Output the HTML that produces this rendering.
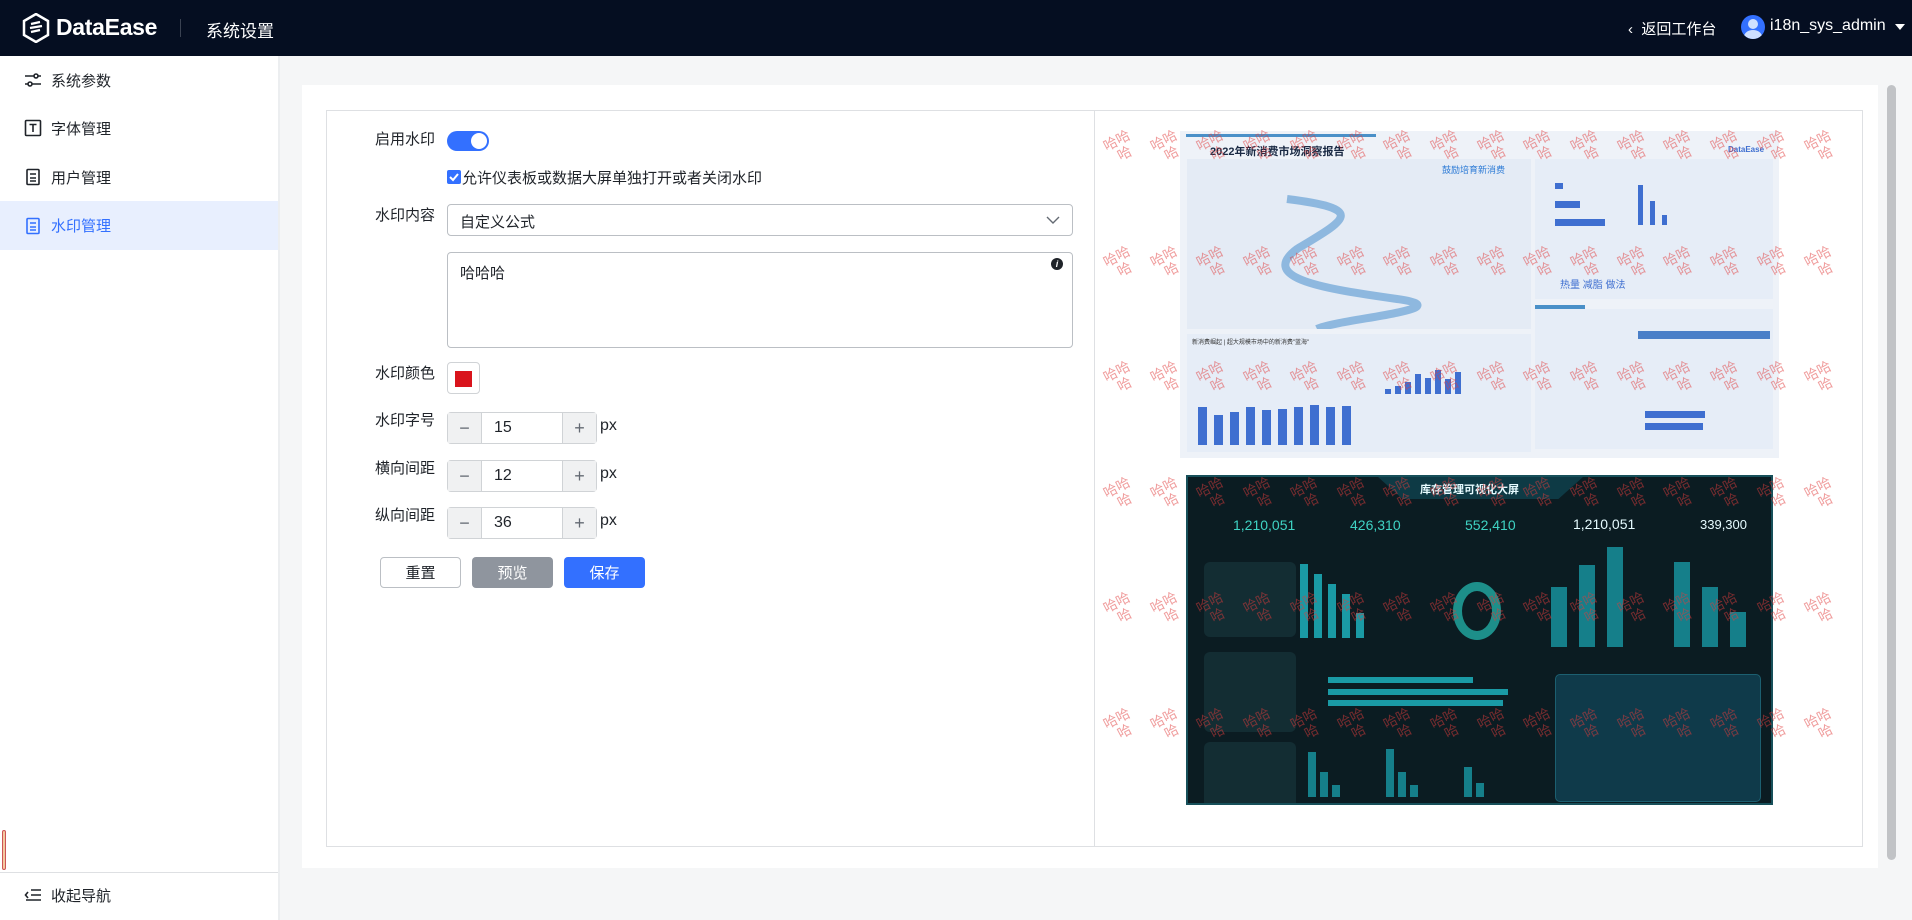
<!DOCTYPE html>
<html><head><meta charset="utf-8">
<style>
*{box-sizing:border-box;margin:0;padding:0}
body{width:1912px;height:920px;overflow:hidden;font-family:"Liberation Sans","Noto Sans CJK SC",sans-serif;background:#f5f6f7;position:relative;color:#1f2329}
.abs{position:absolute}
.hdr{left:0;top:0;width:1912px;height:56px;background:#050e21}
.side{left:0;top:56px;width:278px;height:864px;background:#fff}
.nav{position:absolute;left:0;width:278px;height:48px;display:flex;align-items:center;padding-left:24px;font-size:15px;color:#1f2329}
.nav svg{margin-right:9px}
.lbl{position:absolute;font-size:15px;color:#1f2329;text-align:right;width:100px;left:335px}
.inp{position:absolute;border:1px solid #bbbfc4;border-radius:4px;background:#fff}
.num{position:absolute;left:447px;width:150px;height:32px;border:1px solid #d0d3d6;border-radius:4px;background:#fff;display:flex}
.num .b{width:33px;background:#f0f1f2;display:flex;align-items:center;justify-content:center;font-size:18px;color:#646a73}
.num .v{flex:1;border-left:1px solid #d0d3d6;border-right:1px solid #d0d3d6;padding-left:12px;line-height:30px;font-size:16px}
.px{position:absolute;left:600px;font-size:16px}
.btn{position:absolute;top:557px;height:31px;width:81px;border-radius:4px;font-size:15px;display:flex;align-items:center;justify-content:center}
.wm{position:absolute;width:34px;font-size:14px;line-height:15px;color:rgba(225,60,60,.5);transform:rotate(-28deg)}
.wm span{display:block;padding-left:8px}
</style></head><body>
<div class="abs hdr">
  <svg class="abs" style="left:22px;top:13px" width="28" height="30" viewBox="0 0 28 30"><path d="M14 1 L26 8 V22 L14 29 L2 22 V8 Z" fill="none" stroke="#fff" stroke-width="2.5"/><path d="M9 11 L18 9 M8 15 L20 13 M9 19 L18 17" stroke="#fff" stroke-width="2.2"/></svg>
  <div class="abs" style="left:56px;top:14px;font-size:23px;font-weight:bold;color:#fff;letter-spacing:-0.3px">DataEase</div>
  <div class="abs" style="left:180px;top:19px;width:1px;height:18px;background:#3a4252"></div>
  <div class="abs" style="left:206px;top:17px;font-size:17px;color:#fff">系统设置</div>
  <div class="abs" style="left:1628px;top:18px;font-size:15px;color:#fff">&#8249;&nbsp; 返回工作台</div>
  <div class="abs" style="left:1741px;top:15px;width:24px;height:24px;border-radius:50%;background:#3370ff;overflow:hidden"><div class="abs" style="left:7px;top:4px;width:10px;height:10px;border-radius:50%;background:#cfe0ff"></div><div class="abs" style="left:3px;top:15px;width:18px;height:14px;border-radius:50%;background:#cfe0ff"></div></div>
  <div class="abs" style="left:1770px;top:17px;font-size:16px;color:#fff">i18n_sys_admin</div>
  <div class="abs" style="left:1895px;top:24px;width:0;height:0;border-left:5px solid transparent;border-right:5px solid transparent;border-top:6px solid #fff"></div>
</div>
<div class="abs side">
  <div class="nav" style="top:0"><svg width="18" height="18" viewBox="0 0 18 18" fill="none" stroke="#1f2329" stroke-width="1.6"><path d="M1 5H10M14 5H17M1 13H4M8 13H17"/><circle cx="12" cy="5" r="2"/><circle cx="6" cy="13" r="2"/></svg>系统参数</div>
  <div class="nav" style="top:48px"><svg width="18" height="18" viewBox="0 0 18 18" fill="none" stroke="#1f2329" stroke-width="1.6"><rect x="1.5" y="1.5" width="15" height="15" rx="1"/><path d="M5.5 5.5H12.5M9 5.5V13"/></svg>字体管理</div>
  <div class="nav" style="top:97px"><svg width="18" height="18" viewBox="0 0 18 18" fill="none" stroke="#1f2329" stroke-width="1.6"><rect x="3" y="1.5" width="12" height="15" rx="1"/><path d="M6 6H12M6 10H12M6 13H12"/></svg>用户管理</div>
  <div class="nav" style="top:145px;height:49px;background:#e8effe;color:#3370ff"><svg width="18" height="18" viewBox="0 0 18 18" fill="none" stroke="#3370ff" stroke-width="1.6"><rect x="3" y="1.5" width="12" height="15" rx="1"/><path d="M6 6H12M6 10H12M6 13H12"/></svg>水印管理</div>
  <div class="abs" style="left:2px;top:774px;width:4px;height:40px;border:1px solid #c55;border-radius:2px;background:#f3c9a0"></div>
  <div class="abs" style="left:0;top:816px;width:278px;height:1px;background:#dee0e3"></div>
  <div class="nav" style="top:815px"><svg width="18" height="18" viewBox="0 0 18 18" fill="none" stroke="#1f2329" stroke-width="1.6"><path d="M7 4H17M7 9H17M2 14H17M4 6L1.5 9L4 12"/></svg>收起导航</div>
</div>
<div class="abs" style="left:278px;top:56px;width:2px;height:864px;background:#eceef0"></div>
<div class="abs" style="left:302px;top:85px;width:1576px;height:783px;background:#fff"></div>
<div class="abs" style="left:1887px;top:85px;width:9px;height:775px;background:#c1c3c6;border-radius:5px"></div>
<div class="abs" style="left:326px;top:110px;width:1537px;height:737px;border:1px solid #dee0e3"></div>
<div class="abs" style="left:1094px;top:110px;width:1px;height:737px;background:#dee0e3"></div>

<div class="lbl" style="top:128px">启用水印</div>
<div class="abs" style="left:447px;top:131px;width:42px;height:20px;border-radius:10px;background:#3370ff"><div class="abs" style="left:24px;top:2px;width:16px;height:16px;border-radius:50%;background:#fff"></div></div>
<div class="abs" style="left:447px;top:170px;width:14px;height:14px;border-radius:2px;background:#3370ff"><svg width="14" height="14"><path d="M3 7L6 10L11 4" fill="none" stroke="#fff" stroke-width="2"/></svg></div>
<div class="abs" style="left:462px;top:167px;font-size:15px">允许仪表板或数据大屏单独打开或者关闭水印</div>
<div class="lbl" style="top:204px">水印内容</div>
<div class="inp" style="left:447px;top:204px;width:626px;height:32px"><div class="abs" style="left:12px;top:6px;font-size:15px">自定义公式</div><svg class="abs" style="left:598px;top:10px" width="14" height="10"><path d="M1 2L7 8L13 2" fill="none" stroke="#646a73" stroke-width="1.4"/></svg></div>
<div class="inp" style="left:447px;top:252px;width:626px;height:96px"><div class="abs" style="left:12px;top:9px;font-size:15px">哈哈哈</div><div class="abs" style="left:603px;top:5px;width:12px;height:12px;border-radius:50%;background:#1f2329;color:#fff;font-size:9px;font-style:italic;font-weight:bold;text-align:center;line-height:12px">i</div></div>
<div class="lbl" style="top:362px">水印颜色</div>
<div class="inp" style="left:447px;top:362px;width:33px;height:32px;border-color:#d0d3d6"><div class="abs" style="left:7px;top:8px;width:17px;height:16px;background:#d9141c"></div></div>
<div class="lbl" style="top:409px">水印字号</div>
<div class="num" style="top:412px"><div class="b">−</div><div class="v">15</div><div class="b">+</div></div><div class="px" style="top:417px">px</div>
<div class="lbl" style="top:457px">横向间距</div>
<div class="num" style="top:460px"><div class="b">−</div><div class="v">12</div><div class="b">+</div></div><div class="px" style="top:465px">px</div>
<div class="lbl" style="top:504px">纵向间距</div>
<div class="num" style="top:507px"><div class="b">−</div><div class="v">36</div><div class="b">+</div></div><div class="px" style="top:512px">px</div>
<div class="btn" style="left:380px;border:1px solid #bbbfc4;background:#fff">重置</div>
<div class="btn" style="left:472px;background:#8f959e;color:#fff">预览</div>
<div class="btn" style="left:564px;background:#3370ff;color:#fff">保存</div>

<div class="abs" style="left:1180px;top:131px;width:599px;height:327px;background:#eef2f8;overflow:hidden">
  <div class="abs" style="left:6px;top:3px;width:190px;height:3px;background:#4a90c8"></div>
  <div class="abs" style="left:30px;top:12px;font-size:11px;font-weight:bold;color:#1a2a44">2022年新消费市场洞察报告</div>
  <div class="abs" style="left:548px;top:14px;font-size:8px;color:#3f6fd0;font-weight:bold">DataEase</div>
  <div class="abs" style="left:7px;top:28px;width:344px;height:170px;background:#e4ebf5"></div>
  <svg class="abs" style="left:7px;top:28px" width="344" height="170"><path d="M100 40 C180 50 160 60 110 90 C70 120 140 130 210 140 C280 150 150 160 130 170" fill="none" stroke="#6aa3d6" stroke-width="8" opacity=".7"/></svg>
  <div class="abs" style="left:262px;top:32px;font-size:9px;color:#2d7bd6">鼓励培育新消费</div>
  <div class="abs" style="left:7px;top:203px;width:344px;height:118px;background:#e6edf7"></div>
  <div class="abs" style="left:12px;top:206px;font-size:6px;color:#333">新消费崛起 | 超大规模市场中的新消费"蓝海"</div>
  <div class="abs" style="left:355px;top:28px;width:238px;height:140px;background:#e6edf7"></div>
  <div class="abs" style="left:355px;top:174px;height:4px;background:#4a90c8;width:50px"></div>
  <div class="abs" style="left:355px;top:178px;width:238px;height:140px;background:#e6edf7"></div>
  <div class="abs" style="left:458px;top:200px;width:132px;height:8px;background:#4a7fc8"></div>
  <div class="abs" style="left:375px;top:88px;width:50px;height:7px;background:#3f6fd0"></div>
  <div class="abs" style="left:375px;top:70px;width:25px;height:7px;background:#3f6fd0"></div>
  <div class="abs" style="left:375px;top:52px;width:8px;height:6px;background:#3f6fd0"></div>
  <div class="abs" style="left:458px;top:54px;width:5px;height:40px;background:#3f6fd0"></div>
  <div class="abs" style="left:470px;top:70px;width:5px;height:24px;background:#3f6fd0"></div>
  <div class="abs" style="left:482px;top:84px;width:5px;height:10px;background:#3f6fd0"></div>
  <div class="abs" style="left:380px;top:145px;font-size:10px;color:#3f6fd0">热量 减脂 做法</div>
  <div class="abs" style="left:465px;top:280px;width:60px;height:7px;background:#3f6fd0"></div>
  <div class="abs" style="left:465px;top:292px;width:58px;height:7px;background:#3f6fd0"></div>
</div>
<div class="abs" style="left:1198px;top:385px;display:flex;align-items:flex-end;gap:7px;height:60px">
  <div style="width:9px;height:38px;background:#3f6fd0"></div><div style="width:9px;height:30px;background:#3f6fd0"></div><div style="width:9px;height:33px;background:#3f6fd0"></div><div style="width:9px;height:38px;background:#3f6fd0"></div><div style="width:9px;height:35px;background:#3f6fd0"></div><div style="width:9px;height:36px;background:#3f6fd0"></div><div style="width:9px;height:38px;background:#3f6fd0"></div><div style="width:9px;height:40px;background:#3f6fd0"></div><div style="width:9px;height:38px;background:#3f6fd0"></div><div style="width:9px;height:39px;background:#3f6fd0"></div>
</div>
<div class="abs" style="left:1385px;top:366px;display:flex;align-items:flex-end;gap:4px;height:28px">
  <div style="width:6px;height:5px;background:#3f6fd0"></div><div style="width:6px;height:8px;background:#3f6fd0"></div><div style="width:6px;height:12px;background:#3f6fd0"></div><div style="width:6px;height:20px;background:#3f6fd0"></div><div style="width:6px;height:16px;background:#3f6fd0"></div><div style="width:6px;height:24px;background:#3f6fd0"></div><div style="width:6px;height:15px;background:#3f6fd0"></div><div style="width:6px;height:22px;background:#3f6fd0"></div>
</div>

<div class="abs" style="left:1186px;top:475px;width:587px;height:330px;background:#0b1c22;border:2px solid #17505a;overflow:hidden">
  <div class="abs" style="left:190px;top:0;width:205px;height:22px;background:#0e3a45;clip-path:polygon(0 0,100% 0,88% 100%,12% 100%)"></div>
  <div class="abs" style="left:232px;top:4px;font-size:11px;font-weight:bold;color:#e6fbff">库存管理可视化大屏</div>
  <div class="abs" style="left:45px;top:40px;font-size:14px;color:#3fd3c4">1,210,051</div>
  <div class="abs" style="left:162px;top:40px;font-size:14px;color:#3fd3c4">426,310</div>
  <div class="abs" style="left:277px;top:40px;font-size:14px;color:#3fd3c4">552,410</div>
  <div class="abs" style="left:385px;top:39px;font-size:14px;color:#e6fbff">1,210,051</div>
  <div class="abs" style="left:512px;top:40px;font-size:13px;color:#e6fbff">339,300</div>
  <div class="abs" style="left:16px;top:85px;width:92px;height:75px;background:#132d33;border-radius:6px"></div>
  <div class="abs" style="left:16px;top:175px;width:92px;height:80px;background:#132d33;border-radius:6px"></div>
  <div class="abs" style="left:16px;top:265px;width:92px;height:80px;background:#132d33;border-radius:6px"></div>
  <div class="abs" style="left:16px;top:355px;width:92px;height:80px;background:#132d33;border-radius:6px"></div>
  <div class="abs" style="left:112px;top:86px;display:flex;gap:6px;align-items:flex-end;height:75px"><div style="width:8px;height:74px;background:#1a9aa5"></div><div style="width:8px;height:64px;background:#1a9aa5"></div><div style="width:8px;height:54px;background:#1a9aa5"></div><div style="width:8px;height:44px;background:#1a9aa5"></div><div style="width:8px;height:25px;background:#1a9aa5"></div></div>
  <div class="abs" style="left:265px;top:105px;width:48px;height:58px;border-radius:50%;border:9px solid #1d8f8a"></div>
  <div class="abs" style="left:363px;top:95px;display:flex;gap:12px;align-items:flex-end;height:75px"><div style="width:16px;height:60px;background:#157f8a"></div><div style="width:16px;height:82px;background:#157f8a"></div><div style="width:16px;height:100px;background:#157f8a"></div></div>
  <div class="abs" style="left:486px;top:95px;display:flex;gap:12px;align-items:flex-end;height:75px"><div style="width:16px;height:85px;background:#157f8a"></div><div style="width:16px;height:60px;background:#157f8a"></div><div style="width:16px;height:35px;background:#157f8a"></div></div>
  <div class="abs" style="left:140px;top:200px;width:145px;height:6px;background:#1a9aa5"></div>
  <div class="abs" style="left:140px;top:212px;width:180px;height:6px;background:#1a9aa5"></div>
  <div class="abs" style="left:140px;top:223px;width:175px;height:6px;background:#1a9aa5"></div>
  <div class="abs" style="left:367px;top:197px;width:206px;height:128px;background:#0f3a4a;border-radius:5px;border:1px solid #1c5f70"></div>
  <div class="abs" style="left:120px;top:270px;display:flex;gap:4px;align-items:flex-end;height:50px"><div style="width:8px;height:45px;background:#157f8a"></div><div style="width:8px;height:25px;background:#157f8a"></div><div style="width:8px;height:12px;background:#157f8a"></div><div style="width:38px"></div><div style="width:8px;height:48px;background:#157f8a"></div><div style="width:8px;height:25px;background:#157f8a"></div><div style="width:8px;height:12px;background:#157f8a"></div><div style="width:38px"></div><div style="width:8px;height:30px;background:#157f8a"></div><div style="width:8px;height:14px;background:#157f8a"></div></div>
</div>

<div id="wms"></div>
<script>
var h='';
for(var r=0;r<6;r++){for(var c=0;c<16;c++){var x=1106+c*46.7,y=131+r*115.5;h+='<div class="wm" style="left:'+x+'px;top:'+y+'px">哈哈<span>哈</span></div>';}}
document.getElementById('wms').innerHTML=h;
</script>
</body></html>
